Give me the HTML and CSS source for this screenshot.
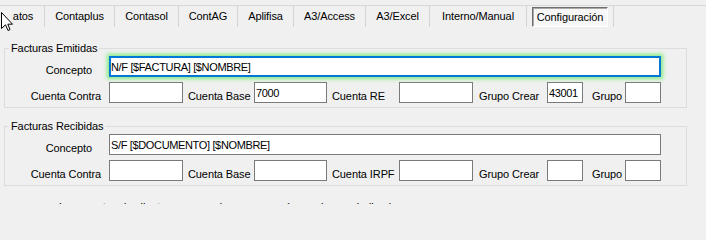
FILE: index.html
```html
<!DOCTYPE html>
<html lang="es">
<head>
<meta charset="utf-8">
<title>Configuración</title>
<link rel="stylesheet" href="styles.css">
</head>
<body>
<div class="window">
  <div class="tabs">
    <div class="tab first"><span class="hidden-by-cursor">D</span>atos</div>
    <div class="tab">Contaplus</div>
    <div class="tab">Contasol</div>
    <div class="tab">ContAG</div>
    <div class="tab">Aplifisa</div>
    <div class="tab">A3/Access</div>
    <div class="tab">A3/Excel</div>
    <div class="tab">Interno/Manual</div>
    <div class="tab selected"><span class="sel-box">Configuración</span></div>
  </div>

  <fieldset class="group first-group">
    <legend>Facturas Emitidas</legend>
    <div class="row row-concept">
      <label class="lbl lbl-concept">Concepto</label>
      <input class="field focus" type="text" value="N/F [$FACTURA] [$NOMBRE]">
    </div>
    <div class="row row-accounts">
      <label class="lbl lbl-first">Cuenta Contra</label>
      <input class="field" type="text" value="">
      <label class="lbl">Cuenta Base</label>
      <input class="field" type="text" value="7000">
      <label class="lbl">Cuenta RE</label>
      <input class="field" type="text" value="">
      <label class="lbl lbl-crear">Grupo Crear</label>
      <input class="field" type="text" value="43001">
      <label class="lbl lbl-grupo">Grupo</label>
      <input class="field" type="text" value="">
    </div>
  </fieldset>

  <fieldset class="group second-group">
    <legend>Facturas Recibidas</legend>
    <div class="row row-concept">
      <label class="lbl lbl-concept">Concepto</label>
      <input class="field" type="text" value="S/F [$DOCUMENTO] [$NOMBRE]">
    </div>
    <div class="row row-accounts">
      <label class="lbl lbl-first">Cuenta Contra</label>
      <input class="field" type="text" value="">
      <label class="lbl">Cuenta Base</label>
      <input class="field" type="text" value="">
      <label class="lbl">Cuenta IRPF</label>
      <input class="field" type="text" value="">
      <label class="lbl lbl-crear">Grupo Crear</label>
      <input class="field" type="text" value="">
      <label class="lbl lbl-grupo">Grupo</label>
      <input class="field" type="text" value="">
    </div>
  </fieldset>

  <p class="note">Las cuentas de clientes y proveedores se crearán en el grupo indicado</p>

  <svg class="cursor" width="14" height="21" viewBox="0 0 14 21" aria-hidden="true">
    <path d="M0.5 0.5 V16.5 L4.5 12.8 L7 18.5 L9 17.6 L6.8 12.2 H11.5 Z" fill="#fff" stroke="#000" stroke-width="1" stroke-linejoin="miter"/>
  </svg>
</div>
</body>
</html>
```

FILE: styles.css
```css
html, body {
  margin: 0;
  padding: 0;
}

body {
  background: #f0f0f0;
  font-family: "Liberation Sans", Arial, sans-serif;
  font-size: 11px;
  letter-spacing: -0.1px;
  color: #000;
  width: 706px;
  height: 204px;
  overflow: hidden;
}

.window {
  position: relative;
  width: 706px;
  height: 204px;
}

/* ---------- tab strip ---------- */
.tabs {
  margin-top: 5px;
  border-top: 1px solid #d9d9d9;
  display: grid;
  grid-template-columns: 45px 70px 64px 59px 56px 72px 64px 97px 87px;
  height: 21px;
}

.tab {
  border-right: 1px solid #d4d4d4;
  text-align: center;
  line-height: 21px;
  white-space: nowrap;
  overflow: hidden;
}

.tab.first {
  text-align: left;
  padding-left: 5px;
}

.hidden-by-cursor {
  color: transparent;
}

.tab.selected {
  text-align: left;
}

.sel-box {
  display: block;
  box-sizing: border-box;
  margin: 1px 0 0 5px;
  width: 76px;
  height: 20px;
  line-height: 18px;
  text-align: center;
  background: #f7f7f7;
  border-style: solid;
  border-width: 1px;
  border-color: #6e6e6e #ffffff #ffffff #6e6e6e;
  box-shadow: inset 1px 1px 0 #a8a8a8;
}

/* ---------- group boxes ---------- */
.group {
  box-sizing: border-box;
  width: 683px;
  min-width: 0;
  margin: 0 0 0 4px;
  padding: 1px 0 4px 0;
  border: 1px solid #dcdcdc;
}

.first-group {
  margin-top: 15px;
}

.second-group {
  margin-top: 12px;
}

.group legend {
  margin-left: 4px;
  padding: 0 2px;
  line-height: 13px;
  font-size: 11px;
}

.row {
  display: grid;
  height: 21px;
}

.row + .row {
  margin-top: 5px;
}

.row-concept {
  grid-template-columns: 104px 552px;
}

.row-accounts {
  grid-template-columns: 104px 74px 71px 73px 72px 74px 74px 36px 42px 36px;
}

.lbl {
  box-sizing: border-box;
  padding: 8px 0 0 5px;
  line-height: 13px;
  white-space: nowrap;
}

.lbl-concept {
  text-align: right;
  padding-left: 0;
  padding-right: 17px;
}

.lbl-first {
  text-align: right;
  padding-left: 0;
  padding-right: 8px;
}

.lbl-crear {
  padding-left: 6px;
}

.lbl-grupo {
  padding-left: 9px;
}

.field {
  box-sizing: border-box;
  height: 21px;
  width: 100%;
  margin: 0;
  padding: 3px 1px 3px 1px;
  border: 1px solid #7a7a7a;
  border-radius: 0;
  background: #fff;
  font-family: "Liberation Sans", Arial, sans-serif;
  font-size: 11px;
  letter-spacing: -0.35px;
  line-height: 13px;
  color: #000;
  outline: none;
}

.field.focus {
  border: 2px solid #0078d7;
  padding: 2px 0 2px 0;
  box-shadow: 0 0 4px 2px rgba(105, 235, 105, 0.8);
}

/* ---------- clipped note ---------- */
.note {
  margin: 15px 0 0 59px;
  line-height: 13px;
  white-space: nowrap;
}

/* ---------- mouse pointer overlay ---------- */
.cursor {
  position: absolute;
  left: 1px;
  top: 7px;
}
```
